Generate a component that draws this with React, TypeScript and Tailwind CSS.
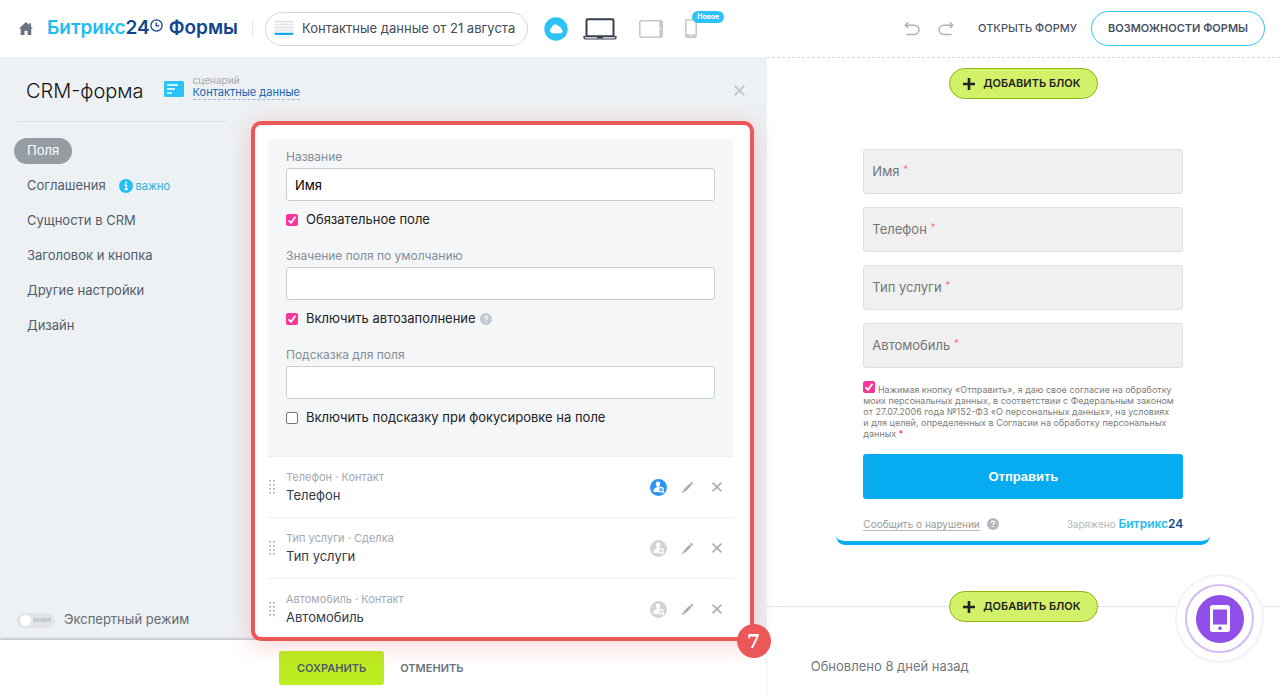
import { useState } from "react";
import type { ReactNode } from "react";
import clsx from "clsx";

const MENU = [
  { id: "fields", title: "Поля" },
  { id: "agreements", title: "Соглашения", important: true },
  { id: "crm", title: "Сущности в CRM" },
  { id: "header", title: "Заголовок и кнопка" },
  { id: "other", title: "Другие настройки" },
  { id: "design", title: "Дизайн" },
];

const FIELDS = [
  { name: "Телефон", entity: "Контакт", autofill: true },
  { name: "Тип услуги", entity: "Сделка", autofill: false },
  { name: "Автомобиль", entity: "Контакт", autofill: false },
];

const PREVIEW_FIELDS = ["Имя", "Телефон", "Тип услуги", "Автомобиль"];

function CheckBox({
  id,
  checked,
  onChange,
}: {
  id: string;
  checked: boolean;
  onChange: (value: boolean) => void;
}) {
  return (
    <span className="inline-grid size-3 shrink-0">
      <input
        id={id}
        type="checkbox"
        checked={checked}
        onChange={(e) => onChange(e.target.checked)}
        className="col-start-1 row-start-1 size-3 appearance-none rounded-[2px] border border-[#777] bg-white checked:border-[#f9369b] checked:bg-[#f9369b]"
      />
      {checked ? (
        <svg
          viewBox="0 0 12 12"
          className="pointer-events-none col-start-1 row-start-1 size-3"
          fill="none"
          stroke="#fff"
          strokeWidth="1.9"
        >
          <path d="M2.6 6.4 5 8.8 9.4 2.8" />
        </svg>
      ) : null}
    </span>
  );
}

function HelpIcon({ className }: { className?: string }) {
  return (
    <svg viewBox="0 0 12 12" className={clsx("size-3 shrink-0", className)}>
      <circle cx="6" cy="6" r="6" fill="currentColor" />
      <path
        d="M4.4 4.8c0-2.2 3.3-2.1 3.3-.2 0 1.1-1.6 1.1-1.6 2.3"
        fill="none"
        stroke="#fff"
        strokeWidth="1.2"
      />
      <circle cx="6.1" cy="8.6" r=".8" fill="#fff" />
    </svg>
  );
}

function CloseIcon({ className }: { className?: string }) {
  return (
    <svg
      viewBox="0 0 10 10"
      className={className}
      fill="none"
      stroke="currentColor"
      strokeWidth="1.6"
    >
      <path d="M.6.6l8.8 8.8M9.4.6.6 9.4" />
    </svg>
  );
}

function AutofillIcon({ active }: { active: boolean }) {
  const color = active ? "#2f94f8" : "#d0d3d7";
  return (
    <svg viewBox="0 0 17 17" className="size-[17px]">
      <circle cx="8.5" cy="8.5" r="8.5" fill={color} />
      <path
        d="M8 2.4c1.6 0 2.3 1.1 2.2 2.5 0 1-.4 1.8-1 2.4v1l1.6.8.2 3.9H3.5c0-2 .3-3.2 1.2-3.7l2.100-1V7.300C6.200 6.700 5.800 5.900 5.800 4.900 5.700 3.500 6.400 2.400 8 2.400Z"
        fill="#fff"
      />
      <circle cx="11" cy="10.7" r="2.3" fill={color} stroke="#fff" strokeWidth="1.1" />
      <path d="m12.6 12.3 1.6 1.6" stroke="#fff" strokeWidth="1.3" />
      <circle cx="11" cy="10.7" r=".6" fill="#fff" />
    </svg>
  );
}

function AddBlockButton() {
  return (
    <button
      type="button"
      className="flex h-[31px] items-center gap-2 rounded-full border border-[#8fb80e] bg-[#d2f168] pr-4 pl-[13px] text-[11px] font-semibold text-[#222]"
    >
      <svg viewBox="0 0 12 12" className="size-3" stroke="currentColor" strokeWidth="2.6">
        <path d="M6 0v12M0 6h12" />
      </svg>
      ДОБАВИТЬ БЛОК
    </button>
  );
}

function TopBar() {
  return (
    <header className="flex h-[57px] shrink-0 items-center bg-white pr-[15px] pl-[19px]">
      <a href="#" aria-label="Главная" className="text-[#6a737f]">
        <svg viewBox="0 0 14 13" className="h-[13px] w-[14px]" fill="currentColor">
          <path d="M7 0 0 6.6h1.7V13h3.8V8.8h3V13h3.8V6.6H14l-2-1.9V1.3h-1.7v1.8Z" />
        </svg>
      </a>

      <a href="#" className="ml-[14px] flex items-center text-[19px] font-semibold text-[#11468f]">
        <span className="text-[#1fbcf3]">Битрикс</span>24
        <svg
          viewBox="0 0 13 13"
          className="mr-[6px] mb-[6px] size-[13px]"
          fill="none"
          stroke="currentColor"
          strokeWidth="1.3"
        >
          <circle cx="6.5" cy="6.5" r="5.6" />
          <path d="M6.3 3.4v3.4h3" />
        </svg>
        Формы
      </a>
      <span className="ml-[14px] h-[17px] w-px bg-[#e4e7ea]" />

      <button
        type="button"
        className="ml-3 flex h-[34px] items-center gap-2 rounded-full border border-[#d5d8dc] pr-3 pl-2 text-[13px] text-[#414b59]"
      >
        <svg viewBox="0 0 20 18" className="h-[18px] w-5">
          <path d="M.5 0h19v12H.5z" fill="#f3f4f5" />
          <path
            d="M.5 1.500h19M.5 4.500h19M.5 7.500h19M.5 10.500h19"
            stroke="#e0e3e5"
            strokeWidth="1.2"
          />
          <path d="M0 12.800h20l-1.500 2.200h-17z" fill="#16a9ee" />
          <path d="M4 16.800q6 1.200 12 0" stroke="#bfe9fb" strokeWidth=".8" fill="none" />
        </svg>
        Контактные данные от 21 августа
      </button>

      <div className="ml-4 flex items-center">
        <button type="button" aria-label="Сохранено в облаке">
          <svg viewBox="0 0 24 24" className="size-6">
            <circle cx="12" cy="12" r="11.7" fill="#2bc2f6" />
            <path
              d="M8.600 16.300a2.900 2.900 0 0 1-.9-5.600 3.900 3.900 0 0 1 7.100-1.500 3.200 3.200 0 0 1 2.500 2.900 2.200 2.200 0 0 1-.6 4.200Z"
              fill="#fff"
            />
          </svg>
        </button>
        <button type="button" aria-label="Компьютер" className="ml-[15px] text-[#353f4e]">
          <svg
            viewBox="0 0 34 22"
            className="h-[22px] w-[34px]"
            fill="none"
            stroke="currentColor"
          >
            <rect x="3.5" y="1.2" width="27" height="17" rx="1" strokeWidth="2" />
            <path d="M1 18.600h32v1.300l-1 1.100H2l-1-1.100Z" fill="#fff" strokeWidth="1.2" />
            <path d="M14 19.700h6" strokeWidth="1.4" />
          </svg>
        </button>
        <button type="button" aria-label="Планшет" className="ml-[22px] text-[#c4c8cd]">
          <svg viewBox="0 0 24 18" className="h-[18px] w-6" fill="none" stroke="currentColor">
            <rect x=".8" y=".8" width="22.4" height="16.4" rx="1.2" strokeWidth="1.5" />
            <path d="M21.700 1v16" strokeWidth="2.6" />
            <circle cx="21.7" cy="9" r=".8" fill="#fff" stroke="none" />
          </svg>
        </button>
        <button
          type="button"
          aria-label="Телефон"
          className="relative ml-[22px] text-[#c4c8cd]"
        >
          <svg viewBox="0 0 12 19" className="h-[19px] w-3" fill="none" stroke="currentColor">
            <rect x=".8" y=".8" width="10.4" height="17.4" rx="1.2" strokeWidth="1.5" />
            <path d="M1 16.700h10" strokeWidth="2.6" />
            <circle cx="6" cy="16.8" r=".7" fill="#fff" stroke="none" />
          </svg>
          <span className="absolute -top-2 left-[7px] flex h-3 items-center rounded-full bg-[#2bc2f6] px-[5px] text-[7px] font-bold text-white">
            Новое
          </span>
        </button>
      </div>

      <div className="ml-auto flex items-center text-[11px] font-semibold text-[#47515f]">
        <button type="button" aria-label="Отменить действие" className="text-[#abb2ba]">
          <svg viewBox="0 0 16 14" className="h-[14px] w-4" fill="none" stroke="currentColor" strokeWidth="1.5">
            <path d="M2 3.200h8.300a4.400 4.400 0 0 1 0 9.200H2.500" />
            <path d="M4.200.4 1.200 3.200l3 2.800" />
          </svg>
        </button>
        <button type="button" aria-label="Повторить действие" className="ml-[18px] text-[#abb2ba]">
          <svg viewBox="0 0 16 14" className="h-[14px] w-4" fill="none" stroke="currentColor" strokeWidth="1.5">
            <path d="M14 3.200H5.700a4.400 4.400 0 0 0 0 9.200h7.800" />
            <path d="m11.800.4 3 2.800-3 2.800" />
          </svg>
        </button>
        <button type="button" className="ml-6 font-medium">
          ОТКРЫТЬ ФОРМУ
        </button>
        <button
          type="button"
          className="ml-[14px] h-[35px] rounded-full border border-[#2fc6f6] px-4"
        >
          ВОЗМОЖНОСТИ ФОРМЫ
        </button>
      </div>
    </header>
  );
}

function SideMenu() {
  const [active, setActive] = useState("fields");
  const [expert, setExpert] = useState(false);

  return (
    <aside className="flex w-[251px] shrink-0 flex-col">
      <nav className="mr-6 ml-[17px] border-t border-[#dde2e6] pt-4">
        <ul className="flex flex-col gap-[9px]">
          {MENU.map((item) => (
            <li key={item.id} className="-ml-[3px] flex items-center">
              <button
                type="button"
                onClick={() => setActive(item.id)}
                className={clsx(
                  "h-[26px] rounded-full px-[13px] text-[13px]",
                  item.id === active ? "bg-[#959ca4] text-white" : "text-[#525c69]"
                )}
              >
                {item.title}
              </button>
              {item.important ? (
                <span className="flex items-center gap-[3px] text-[11px] text-[#2bb0e0]">
                  <svg viewBox="0 0 14 14" className="size-[14px]">
                    <circle cx="7" cy="7" r="7" fill="#1fbff5" />
                    <circle cx="7" cy="3.6" r="1.1" fill="#fff" />
                    <path d="M5.400 6.100h2v4M5.200 10.400h3.800" fill="none" stroke="#fff" strokeWidth="1.4" />
                  </svg>
                  важно
                </span>
              ) : null}
            </li>
          ))}
        </ul>
      </nav>

      <label className="mt-auto mb-[10px] ml-[17px] flex h-5 items-center gap-[9px] text-[13px] text-[#646a72]">
        <input
          type="checkbox"
          role="switch"
          checked={expert}
          onChange={(e) => setExpert(e.target.checked)}
          className="sr-only"
        />
        <span
          className={clsx(
            "flex h-[15px] w-[38px] items-center justify-between rounded-full px-[3px]",
            expert ? "flex-row-reverse bg-[#2fc6f6]" : "bg-[#e2e4e7]"
          )}
        >
          <span className="size-[11px] rounded-full bg-white" />
          <span className="pr-px text-[7px] font-bold text-[#b9bdc3]">
            {expert ? "вкл" : "выкл"}
          </span>
        </span>
        Экспертный режим
      </label>
    </aside>
  );
}

function SettingGroup({
  id,
  label,
  defaultValue = "",
  option,
  defaultChecked = false,
  children,
}: {
  id: string;
  label: string;
  defaultValue?: string;
  option: string;
  defaultChecked?: boolean;
  children?: ReactNode;
}) {
  const [value, setValue] = useState(defaultValue);
  const [checked, setChecked] = useState(defaultChecked);

  return (
    <div>
      <label htmlFor={id} className="mb-[3px] block text-[12px] leading-4 text-[#848d99]">
        {label}
      </label>
      <input
        id={id}
        type="text"
        value={value}
        onChange={(e) => setValue(e.target.value)}
        className="block h-[33px] w-full rounded-[3px] border border-[#c6cdd3] bg-white px-2 text-[13px] text-black"
      />
      <div className="mt-[9px] flex h-5 items-center">
        <CheckBox id={`${id}-option`} checked={checked} onChange={setChecked} />
        <label htmlFor={`${id}-option`} className="pl-2 text-[13px] text-[#222]">
          {option}
        </label>
        {children}
      </div>
    </div>
  );
}

function FieldRow({ field }: { field: (typeof FIELDS)[number] }) {
  return (
    <li className="flex items-center border-t border-[#eceef1] py-3 pr-[11px] last:pb-[10px]">
      <svg viewBox="0 0 8 14" className="mr-[10px] h-[14px] w-2" fill="#b3b8be">
        {[1, 5, 9, 13].map((y) => (
          <g key={y}>
            <rect x="1" y={y - 1} width="2" height="1.6" />
            <rect x="5" y={y - 1} width="2" height="1.6" />
          </g>
        ))}
      </svg>
      <div>
        <div className="text-[11px] leading-4 text-[#a3a9b1]">
          {field.name} · {field.entity}
        </div>
        <div className="text-[13px] leading-5 text-[#333b47]">{field.name}</div>
      </div>
      <div className="ml-auto flex items-center text-[#a8adb4]">
        <button type="button" aria-label="Автозаполнение">
          <AutofillIcon active={field.autofill} />
        </button>
        <button type="button" aria-label="Изменить" className="ml-[15px]">
          <svg viewBox="0 0 11 11" className="size-[11px]" fill="currentColor">
            <path d="M0 11 .8 8.300 2.700 10.200ZM1.200 7.900 7.500 1.600l1.900 1.900-6.300 6.300ZM8 1.100 9 .2c.4-.3.800-.2 1.100.1l.6.600c.3.300.4.700.1 1.100L9.900 3Z" />
          </svg>
        </button>
        <button type="button" aria-label="Удалить" className="ml-[19px]">
          <CloseIcon className="size-[10px]" />
        </button>
      </div>
    </li>
  );
}

function FieldsPanel() {
  return (
    <section className="relative z-10 mr-[13px] -mb-px min-w-0 flex-1 rounded-[10px] border-4 border-[#ec5757] bg-white pt-[14px] pr-[17px] pl-[13px] shadow-[0_4px_24px_rgba(236,87,87,0.28)]">
      <div className="flex flex-col gap-[18px] bg-[#f4f6f8] px-[18px] pt-[10px] pb-[28px]">
        <SettingGroup
          id="title"
          label="Название"
          defaultValue="Имя"
          option="Обязательное поле"
          defaultChecked
        />
        <SettingGroup
          id="default"
          label="Значение поля по умолчанию"
          option="Включить автозаполнение"
          defaultChecked
        >
          <HelpIcon className="ml-1 text-[#c3c7d5]" />
        </SettingGroup>
        <SettingGroup
          id="hint"
          label="Подсказка для поля"
          option="Включить подсказку при фокусировке на поле"
        />
      </div>
      <ul>
        {FIELDS.map((field) => (
          <FieldRow key={field.name} field={field} />
        ))}
      </ul>
      <span className="absolute -right-[21px] -bottom-[21px] flex size-[34px] items-center justify-center rounded-full bg-[#ec5757] font-['DejaVu_Serif',serif] text-[19px] font-bold text-white">
        7
      </span>
    </section>
  );
}

function Editor() {
  return (
    <div className="flex w-[59.9%] flex-col bg-[#edf1f4]">
      <div className="flex h-16 items-center pt-[3px] pr-[22px] pl-[26px]">
        <h1 className="text-[20px] font-light text-[#111]">CRM-форма</h1>
        <svg viewBox="0 0 20 16" className="mr-[9px] mb-1 ml-5 h-4 w-5">
          <rect width="20" height="16" rx="1.5" fill="#2bc2f6" />
          <path d="M3 4h11M3 8h8M3 12h5" stroke="#fff" strokeWidth="1.6" />
        </svg>
        <div className="mb-2 flex flex-col items-start">
          <span className="text-[10px] leading-3 text-[#a3a9b1]">сценарий</span>
          <a
            href="#"
            className="border-b border-dashed border-[#9dbbe0] text-[11px] leading-[13px] text-[#2067b0]"
          >
            Контактные данные
          </a>
        </div>
        <button type="button" aria-label="Закрыть" className="ml-auto text-[#bfc4ca]">
          <CloseIcon className="size-[11px]" />
        </button>
      </div>

      <div className="flex">
        <SideMenu />
        <FieldsPanel />
      </div>

      <div className="flex flex-1 items-start border-r border-[#eceef0] bg-white pt-[11px] pl-[279px] text-[11px] font-semibold shadow-[0_-1px_3px_rgba(0,0,0,0.25)]">
        <button
          type="button"
          className="relative h-[34px] rounded-[3px] bg-[#bbed21] px-[18px] text-[#535c69]"
        >
          СОХРАНИТЬ
        </button>
        <button type="button" className="h-[34px] px-4 text-[#6b737e]">
          ОТМЕНИТЬ
        </button>
      </div>
    </div>
  );
}

function Preview() {
  const [agreed, setAgreed] = useState(true);

  return (
    <main className="flex min-w-0 flex-1 flex-col items-center border-t border-dashed border-[#d9dcdf] bg-white pt-[10px]">
      <AddBlockButton />

      <form
        onSubmit={(e) => e.preventDefault()}
        className="mt-[42px] w-[374px] rounded-b-[9px] border-b-4 border-[#06acef] bg-white px-[27px] pt-2 pb-[9px]"
      >
        <div className="flex flex-col gap-[13px]">
          {PREVIEW_FIELDS.map((name) => (
            <label
              key={name}
              className="flex h-[45px] items-center rounded-[3px] border border-[#dfdfdf] bg-[#f0f0f0] px-2 text-[13px] text-[#757575]"
            >
              <span>
                {name} <span className="align-top text-[10px] text-[#ff7b7b]">*</span>
              </span>
              <input
                type="text"
                aria-label={name}
                className="min-w-0 flex-1 bg-transparent px-2 outline-none"
              />
            </label>
          ))}
        </div>

        <div className="mt-[13px] text-[9px] leading-[11px] text-[#7d7d7d]">
          <CheckBox id="consent" checked={agreed} onChange={setAgreed} />{" "}
          <label htmlFor="consent">
            Нажимая кнопку «Отправить», я даю свое согласие на обработку моих персональных
            данных, в соответствии с Федеральным законом от 27.07.2006 года №152-ФЗ «О
            персональных данных», на условиях и&nbsp;для целей, определенных в Согласии на
            обработку персональных данных <span className="text-[#ff1010]">*</span>
          </label>
        </div>

        <button
          type="submit"
          className="mt-[15px] h-[45px] w-full rounded-[3px] bg-[#06acef] font-['Liberation_Sans',Arial,sans-serif] text-[13px] font-bold text-white"
        >
          Отправить
        </button>

        <div className="mt-[17px] flex items-center text-[10px] leading-4 text-[#9a9a9a]">
          <a href="#" className="border-b border-[#b9b9b9] leading-3">
            Сообщить о нарушении
          </a>
          <HelpIcon className="ml-[7px] text-[#b5b9bd]" />
          <span className="ml-auto text-[#b3b7bb]">
            Заряжено{" "}
            <b className="text-[12px] font-semibold text-[#1fbcf3]">
              Битрикс<span className="text-[#11468f]">24</span>
            </b>
          </span>
        </div>
      </form>

      <div className="mt-[46px] flex w-full items-center">
        <span className="flex-1 border-t border-dotted border-[#d3d6da]" />
        <AddBlockButton />
        <span className="flex-1 border-t border-dotted border-[#d3d6da]" />
      </div>

      <p className="mt-[34px] self-start pl-11 text-[13px] leading-5 text-[#717780]">
        Обновлено 8 дней назад
      </p>
    </main>
  );
}

function CallbackWidget() {
  return (
    <button
      type="button"
      aria-label="Обратный звонок"
      className="fixed right-4 bottom-8 flex size-[89px] items-center justify-center rounded-full border-2 border-[#f5f0fd] bg-white"
    >
      <span className="flex size-[69px] items-center justify-center rounded-full border-2 border-[#d3bcf6]">
        <span className="flex size-12 items-center justify-center rounded-full bg-[#8f4fe8]">
          <svg viewBox="0 0 20 27" className="h-[27px] w-5">
            <rect width="20" height="27" rx="2.5" fill="#fff" />
            <path d="M3 4.500h14v15H3z" fill="#8f4fe8" />
            <circle cx="10" cy="23.3" r="1.7" fill="#8f4fe8" />
          </svg>
        </span>
      </span>
    </button>
  );
}

export default function App() {
  return (
    <div className="flex min-h-screen flex-col bg-white font-['Inter',sans-serif]">
      <TopBar />
      <div className="flex flex-1">
        <Editor />
        <Preview />
      </div>
      <CallbackWidget />
    </div>
  );
}
